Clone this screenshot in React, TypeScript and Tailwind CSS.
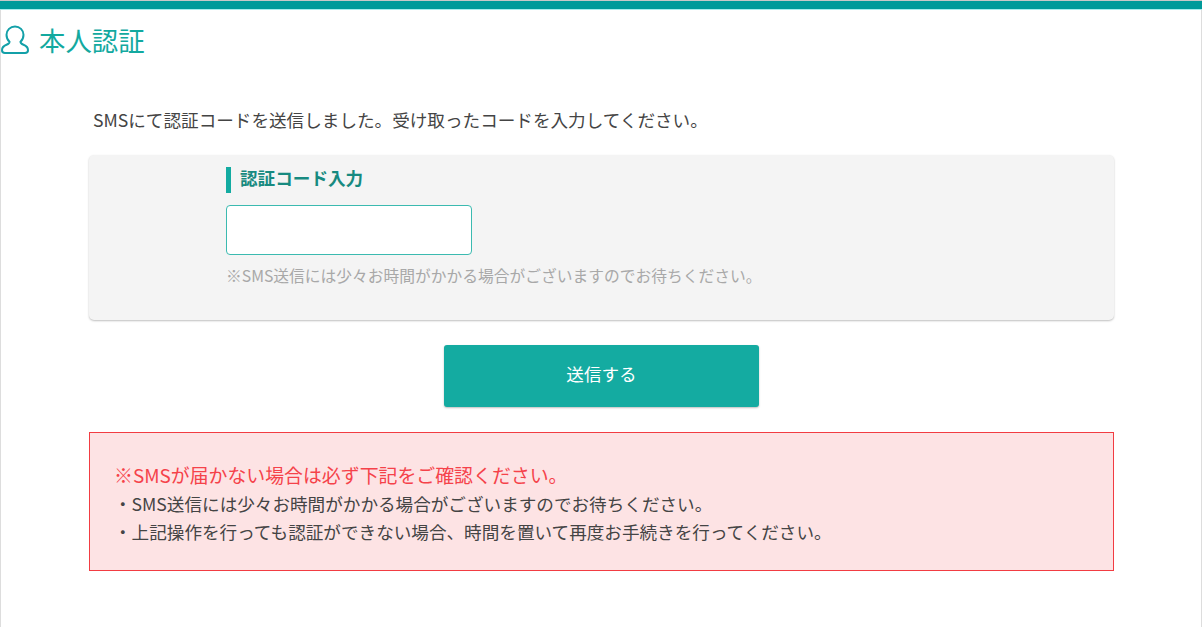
export default function App() {
  const font = "font-['Noto_Sans_CJK_JP','Liberation_Sans',sans-serif]";

  return (
    <div className={`${font} h-[627px] overflow-hidden bg-white text-[#444]`}>
      <div className="h-[10px] border-t border-t-[#c8c8c8] border-b border-b-[#a8ecec] bg-[#009a9a]" />
      <div className="h-[617px] border-x border-[#dddddd]">
        <h1 className="flex h-[62px] items-center text-[26.4px] leading-none font-normal text-[#13a99f]">
          <svg width="28" height="30" viewBox="0 0 28 30" fill="none" stroke="#13a0a8" strokeWidth="2" className="relative top-[-1px] mr-[10px] shrink-0">
            <path d="M14 1.500c-4.700 0-8.500 3.500-8.500 8.300 0 3 1.300 5.500 3 7 0 1.400-1 2.200-3 3C2.500 21 1 23 1 25.200 1 27 2.200 28 4 28h20c1.800 0 3-1 3-2.800 0-2.200-1.500-4.200-4.500-5.400-2-.8-3-1.600-3-3 1.700-1.500 3-4 3-7 0-4.800-3.800-8.300-8.500-8.300Z" />
          </svg>
          <span className="relative top-[-1px]">本人認証</span>
        </h1>

        <div className="pt-[36px] pl-[88px] pr-[87px]">
          <p className="pl-[4px] text-[17.6px] leading-[24px]">SMSにて認証コードを送信しました。受け取ったコードを入力してください。</p>

          <div className="mt-[23px] h-[165px] rounded-[5px] bg-[#f4f4f4] pt-[12px] pl-[137px] shadow-[0_1px_2px_rgba(0,0,0,0.25)]">
            <div className="flex h-[26px] items-center border-l-[5px] border-[#13aba1] pb-[3px] pl-[9px] text-[17.6px] font-bold text-[#178a80]">認証コード入力</div>
            <input type="text" className="mt-[12px] block h-[50px] w-[246px] rounded-[4px] border border-[#3bbab0] bg-white" />
            <p className="mt-[9px] text-[15.75px] leading-[24px] text-[#a8a8a8]">※SMS送信には少々お時間がかかる場合がございますのでお待ちください。</p>
          </div>

          <button className="mx-auto mt-[25px] block h-[62px] w-[315px] rounded-[3px] bg-[#14aba1] pb-[3px] text-[17.6px] text-white shadow-[0_1px_2px_rgba(0,0,0,0.25)]">送信する</button>

          <div className="mt-[25px] h-[139px] border border-[#f23c42] bg-[#fde3e4] pt-[28px] pl-[24px] text-[17.6px] leading-[28px]">
            <p className="mb-[1px] text-[18.9px] text-[#f5424a]">※SMSが届かない場合は必ず下記をご確認ください。</p>
            <p>・SMS送信には少々お時間がかかる場合がございますのでお待ちください。</p>
            <p>・上記操作を行っても認証ができない場合、時間を置いて再度お手続きを行ってください。</p>
          </div>
        </div>
      </div>
    </div>
  );
}
